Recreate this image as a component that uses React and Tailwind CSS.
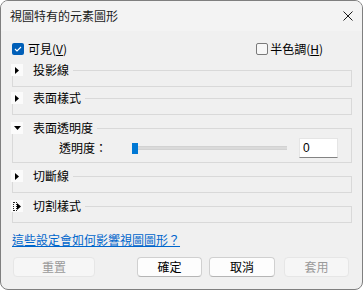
import React from "react";

const FONT = { fontFamily: '"Noto Sans CJK TC", "Noto Sans", sans-serif' };

function Tri({ down, focus }) {
  return (
    <div className="w-[12px] h-[12px] bg-[#fbfbfb] flex items-center justify-center shrink-0">
      {down ? (
        <svg width="7" height="4" viewBox="0 0 7 4">
          <path d="M0 0 L7 0 L3.5 4 Z" fill="#000" />
        </svg>
      ) : focus ? (
        <div className="flex items-center">
          <div className="w-[4px] h-[9px] border border-dotted border-[#222]" />
          <svg width="4" height="7" viewBox="0 0 4 7">
            <path d="M0 0 L4 3.5 L0 7 Z" fill="#000" />
          </svg>
        </div>
      ) : (
        <svg width="4" height="7" viewBox="0 0 4 7">
          <path d="M0 0 L4 3.5 L0 7 Z" fill="#000" />
        </svg>
      )}
    </div>
  );
}

function Group({ title, down, focus, mt, bodyH, children }) {
  return (
    <div className={mt}>
      <div className="flex h-[12px]">
        <Tri down={down} focus={focus} />
        <div className="ml-[10px] text-[12px] leading-[12px] text-black self-center whitespace-nowrap">{title}</div>
        <div className="flex-1 ml-[4px] mt-[6px] h-[6px] border-t border-r border-[#d9d9d9]" />
      </div>
      <div className={"ml-[1px] border-l border-r border-b border-[#d9d9d9] " + bodyH}>{children}</div>
    </div>
  );
}

export default function App() {
  return (
    <div className="w-[364px] h-[291px] bg-white" style={FONT}>
      <div className="w-[363px] h-[290px] border border-[#7f7f7f] rounded-[8px] overflow-hidden bg-[#f0f0f0] flex flex-col">
        <div className="h-[30px] bg-[#f3f3f3] flex items-center pl-[9px] pr-[8px] shrink-0">
          <div className="text-[12px] text-[#1a1a1a] leading-[14px]">視圖特有的元素圖形</div>
          <svg className="ml-auto mr-[1px]" width="10" height="10" viewBox="0 0 10 10">
            <path d="M0.5 0.5 L9.5 9.5 M9.5 0.5 L0.5 9.5" stroke="#1a1a1a" strokeWidth="1" />
          </svg>
        </div>
        <div className="flex flex-col px-[10px]">
          <div className="mt-[12px] h-[12px] flex items-center">
            <div className="ml-[1px] w-[12px] h-[12px] rounded-[2px] bg-[#005fb8] flex items-center justify-center">
              <svg width="8" height="6" viewBox="0 0 8 6">
                <path d="M1 3 L3 5 L7 1" stroke="#fff" strokeWidth="1.1" fill="none" />
              </svg>
            </div>
            <div className="ml-[4px] text-[12px] leading-[12px] text-black">
              可見(<span className="underline">V</span>)
            </div>
            <div className="ml-auto w-[12px] h-[12px] rounded-[2px] border border-[#7a7a7a] bg-[#f7f7f7]" />
            <div className="ml-[2px] mr-[29px] text-[12px] leading-[12px] text-black">
              半色調(<span className="underline">H</span>)
            </div>
          </div>

          <Group title="投影線" mt="mt-[9px]" bodyH="h-[11px]" />
          <Group title="表面樣式" mt="mt-[5px]" bodyH="h-[11px]" />
          <Group title="表面透明度" down mt="mt-[7px]" bodyH="h-[29px]">
            <div className="flex items-center h-[28px]">
              <div className="ml-[46px] w-[73px] text-[12px] leading-[12px] text-black whitespace-nowrap">透明度：</div>
              <div className="relative w-[155px] h-[11px] flex items-center">
                <div className="w-[6px] h-[11px] bg-[#0078d4] shrink-0" />
                <div className="flex-1 h-[4px] bg-[#dadada] border-y border-[#d2d2d2]" />
              </div>
              <div className="ml-[12px] w-[39px] h-[20px] bg-white border border-[#e5e5e5] border-b-[#838383] text-[12px] leading-[18px] pl-[3px] text-black" style={{ fontFamily: '"Liberation Sans", sans-serif' }}>
                0
              </div>
            </div>
          </Group>
          <Group title="切斷線" mt="mt-[7px]" bodyH="h-[11px]" />
          <Group title="切割樣式" focus mt="mt-[7px]" bodyH="h-[11px]" />

          <div className="mt-[9px] ml-[1px] text-[12px] leading-[16px] text-[#0066cc] underline whitespace-nowrap">
            這些設定會如何影響視圖圖形？
          </div>

          <div className="mt-[9px] flex h-[20px]">
            <div className="ml-[2px] w-[82px] h-[20px] rounded-[4px] bg-[#f6f6f6] border border-[#e6e6e6] flex items-center justify-center text-[12px] text-[#9a9a9a]">重置</div>
            <div className="ml-[42px] w-[65px] h-[20px] rounded-[4px] bg-[#fdfdfd] border border-[#d0d0d0] border-b-[#b5b5b5] flex items-center justify-center text-[12px] text-black">確定</div>
            <div className="ml-[7px] w-[66px] h-[20px] rounded-[4px] bg-[#fdfdfd] border border-[#d0d0d0] border-b-[#b5b5b5] flex items-center justify-center text-[12px] text-black">取消</div>
            <div className="ml-[9px] w-[65px] h-[20px] rounded-[4px] bg-[#f6f6f6] border border-[#e6e6e6] flex items-center justify-center text-[12px] text-[#9a9a9a]">套用</div>
          </div>
        </div>
      </div>
    </div>
  );
}
